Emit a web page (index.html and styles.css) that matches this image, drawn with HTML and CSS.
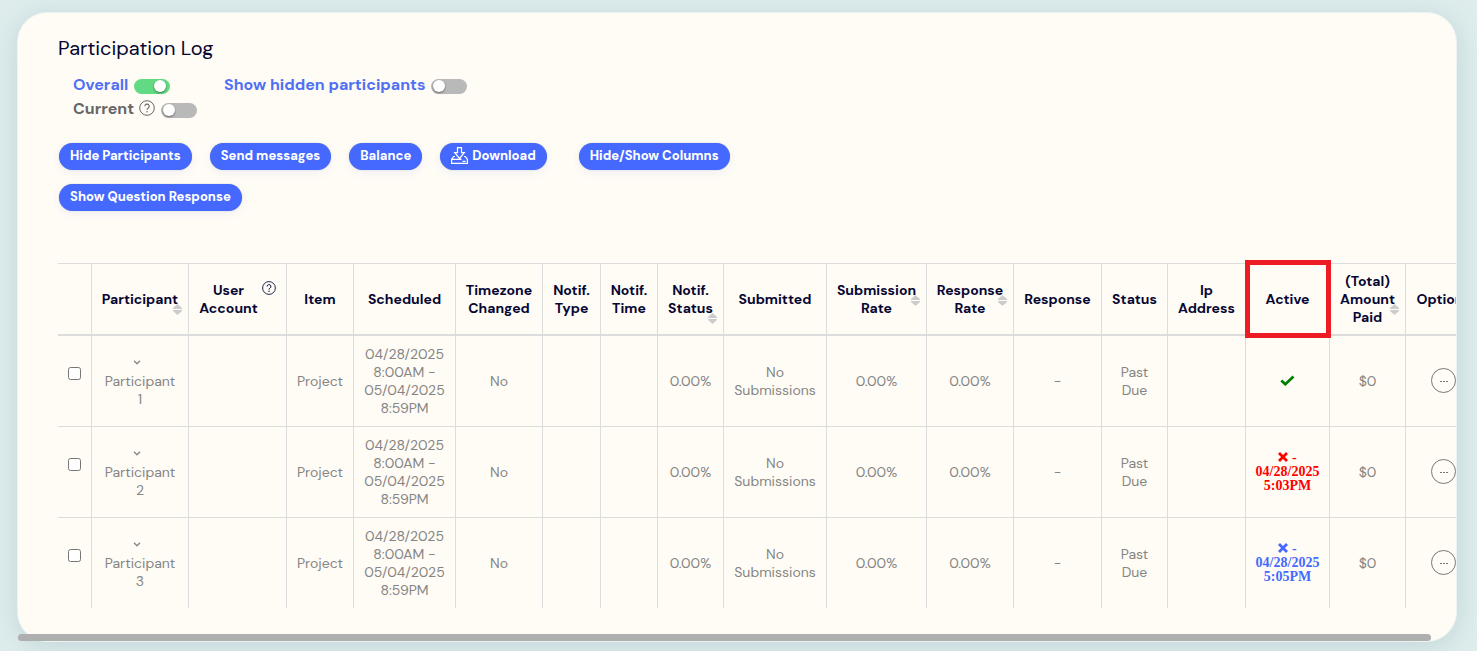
FILE: index.html
```html
<!DOCTYPE html>
<html lang="en">
<head>
<meta charset="utf-8">
<title>Participation Log</title>
<link rel="stylesheet" href="styles.css">
</head>
<body>
<svg class="defs" aria-hidden="true">
  <symbol id="help" viewBox="0 0 16 16"><circle cx="8" cy="8" r="7.3" fill="none" stroke="currentColor"/><path d="M5.8 6.3a2.2 2.2 0 1 1 3.3 1.9C8.300 8.700 8 9 8 9.800" fill="none" stroke="currentColor" stroke-width="1.100"/><circle cx="8" cy="11.700" r=".75" fill="currentColor"/></symbol>
  <symbol id="sort" viewBox="0 0 9 11"><path d="M4.500 0 9 4v1H0V4zM0 6h9v1l-4.500 4L0 7z" fill="currentColor"/></symbol>
  <symbol id="chevron" viewBox="0 0 8 5"><path d="m1 .8 3 3 3-3" fill="none" stroke="currentColor" stroke-width="1.300"/></symbol>
  <symbol id="cross" viewBox="0 0 10 10"><path d="m1 1 8 8m0-8L1 9" fill="none" stroke="currentColor" stroke-width="2.800"/></symbol>
</svg>
<main class="card">
  <div class="card-scroll">
    <h1 class="title">Participation Log</h1>
    <div class="toggles">
      <div class="toggle-group">
        <label class="toggle active">Overall <input class="switch" type="checkbox" checked></label>
        <label class="toggle">Current <span class="help-wrap"><svg class="help"><use href="#help"/></svg> <input class="switch" type="checkbox"></span></label>
      </div>
      <label class="toggle active">Show hidden participants <input class="switch" type="checkbox"></label>
    </div>
    <div class="actions">
      <button class="btn" type="button">Hide Participants</button>
      <button class="btn" type="button">Send messages</button>
      <button class="btn" type="button">Balance</button>
      <button class="btn btn-download" type="button"><svg class="download" viewBox="0 0 17 17"><path d="M6.500 .6h4v5h2.800L8.500 11.500 3.700 5.600h2.800zM4 9.500H2.800L.6 12.300v4h15.800v-4L14.200 9.500H13M.6 12.300h9.900M11.500 14.300h3" fill="none" stroke="currentColor" stroke-width="1.200"/></svg>Download</button>
      <button class="btn" type="button">Hide/Show Columns</button>
    </div>
    <div class="actions">
      <button class="btn" type="button">Show Question Response</button>
    </div>
    <table class="log">
      <colgroup><col class="w33"><col class="w97"><col class="w98"><col class="w67"><col class="w102"><col class="w87"><col class="w58"><col class="w57"><col class="w66"><col class="w103"><col class="w100"><col class="w87"><col class="w88"><col class="w66"><col class="w78"><col class="w84"><col class="w76"><col class="w76"></colgroup>
      <thead>
        <tr>
          <th></th>
          <th>Participant<svg class="sort sort-mid"><use href="#sort"/></svg></th>
          <th><span class="with-help">User<br>Account<svg class="help-small"><use href="#help"/></svg></span></th>
          <th>Item</th><th>Scheduled</th><th>Timezone Changed</th><th>Notif. Type</th><th>Notif. Time</th>
          <th>Notif. Status<svg class="sort sort-low"><use href="#sort"/></svg></th>
          <th>Submitted</th>
          <th>Submission Rate<svg class="sort"><use href="#sort"/></svg></th>
          <th>Response Rate<svg class="sort"><use href="#sort"/></svg></th>
          <th>Response</th><th>Status</th><th>Ip Address</th>
          <th class="marked">Active</th>
          <th>(Total) Amount Paid<svg class="sort sort-mid"><use href="#sort"/></svg></th>
          <th>Options</th>
        </tr>
      </thead>
      <tbody>
        <tr>
          <td><input class="pick" type="checkbox" aria-label="Select Participant 1"></td>
          <td><svg class="chevron"><use href="#chevron"/></svg>Participant<br>1</td><td></td><td>Project</td>
          <td>04/28/2025 8:00AM - 05/04/2025 8:59PM</td><td>No</td><td></td><td></td><td>0.00%</td><td>No Submissions</td><td>0.00%</td><td>0.00%</td><td>-</td><td>Past<br>Due</td><td></td>
          <td><svg class="check" viewBox="0 0 15 11"><path d="m1.300 5.500 4 3.700 8.200-7.700" fill="none" stroke="currentColor" stroke-width="2.800"/></svg></td>
          <td>$0</td><td><button class="more" type="button" aria-label="Options"><svg viewBox="0 0 25 25"><circle cx="12.500" cy="12.500" r="12" fill="none" stroke="currentColor"/><path d="M9 13.500h2m1 0h2m1 0h2" stroke="currentColor"/></svg></button></td>
        </tr>
        <tr>
          <td><input class="pick" type="checkbox" aria-label="Select Participant 2"></td>
          <td><svg class="chevron"><use href="#chevron"/></svg>Participant<br>2</td><td></td><td>Project</td>
          <td>04/28/2025 8:00AM - 05/04/2025 8:59PM</td><td>No</td><td></td><td></td><td>0.00%</td><td>No Submissions</td><td>0.00%</td><td>0.00%</td><td>-</td><td>Past<br>Due</td><td></td>
          <td class="inactive red"><svg class="cross"><use href="#cross"/></svg> -<br>04/28/2025 5:03PM</td>
          <td>$0</td><td><button class="more" type="button" aria-label="Options"><svg viewBox="0 0 25 25"><circle cx="12.500" cy="12.500" r="12" fill="none" stroke="currentColor"/><path d="M9 13.500h2m1 0h2m1 0h2" stroke="currentColor"/></svg></button></td>
        </tr>
        <tr>
          <td><input class="pick" type="checkbox" aria-label="Select Participant 3"></td>
          <td><svg class="chevron"><use href="#chevron"/></svg>Participant<br>3</td><td></td><td>Project</td>
          <td>04/28/2025 8:00AM - 05/04/2025 8:59PM</td><td>No</td><td></td><td></td><td>0.00%</td><td>No Submissions</td><td>0.00%</td><td>0.00%</td><td>-</td><td>Past<br>Due</td><td></td>
          <td class="inactive blue"><svg class="cross"><use href="#cross"/></svg> -<br>04/28/2025 5:05PM</td>
          <td>$0</td><td><button class="more" type="button" aria-label="Options"><svg viewBox="0 0 25 25"><circle cx="12.500" cy="12.500" r="12" fill="none" stroke="currentColor"/><path d="M9 13.500h2m1 0h2m1 0h2" stroke="currentColor"/></svg></button></td>
        </tr>
      </tbody>
    </table>
  </div>
  <div class="thumb"></div>
</main>
</body>
</html>
```
FILE: styles.css
```css
* { box-sizing: border-box; }
body {
  margin: 0;
  padding: 12px 20px 10px 17px;
  background: #deecec;
  font-family: "DM Sans", Inter, "Liberation Sans", sans-serif;
  color: #858585;
  overflow: hidden;
}
.defs { display: none; }
.card {
  position: relative;
  border: 1px solid #edf3f3;
  border-radius: 30px;
  background: #fffcf5;
  box-shadow: 0 4px 24px rgba(110, 150, 160, .25);
}
.card-scroll {
  overflow: hidden;
  border-radius: 29px;
  padding: 23px 0 33px 40px;
}
.title {
  margin: 0 0 13px;
  font-size: 20px;
  line-height: 24px;
  font-weight: 400;
  color: #060633;
}
.toggles { display: flex; gap: 27px; margin-left: 15px; }
.toggle-group { display: flex; flex-direction: column; align-items: flex-start; }
.toggle {
  display: flex;
  gap: 6px;
  height: 24px;
  font-size: 16px;
  line-height: 24px;
  font-weight: 700;
  color: #666;
}
.active { color: #4f70f3; }
.toggle:has(.help-wrap) { gap: 5px; }
.help-wrap { display: flex; gap: 6px; }
.help { width: 16px; height: 16px; margin-top: 3px; }
.switch {
  appearance: none;
  position: relative;
  width: 36px;
  height: 15px;
  margin: 6px 0 0;
  border-radius: 8px;
  background: #b9b9b9;
}
.switch::after {
  content: "";
  position: absolute;
  top: 1px;
  left: 2px;
  width: 12px;
  height: 12px;
  border-radius: 50%;
  background: #fff;
  box-shadow: 0 1px 2px rgba(0, 0, 0, .45);
}
.switch:checked { background: #62d983; }
.switch:checked::after { left: 20px; }
.actions { display: flex; gap: 18px; margin: 22px 0 0 1px; }
.actions + .actions { margin-top: 14px; }
.btn {
  height: 27px;
  padding: 0 11px 1px;
  border: 0;
  border-radius: 14px;
  background: #4569ff;
  box-shadow: 0 0 1px rgba(0, 0, 0, .4), 0 3px 8px rgba(69, 105, 255, .08);
  color: #fff;
  font: 800 13px/18px "DM Sans", Inter, "Liberation Sans", sans-serif;
}
.btn-download { display: flex; align-items: center; gap: 4px; margin-right: 14px; }
.download { width: 17px; height: 17px; margin-bottom: 2px; }
.log {
  width: 1423px;
  margin-top: 52px;
  table-layout: fixed;
  border-collapse: collapse;
  font-size: 14px;
  line-height: 18px;
  text-align: center;
}
.w33 { width: 33px; } .w57 { width: 57px; } .w58 { width: 58px; }
.w66 { width: 66px; } .w67 { width: 67px; } .w76 { width: 76px; }
.w78 { width: 78px; } .w84 { width: 84px; } .w87 { width: 87px; }
.w88 { width: 88px; } .w97 { width: 97px; } .w98 { width: 98px; }
.w100 { width: 100px; } .w102 { width: 102px; } .w103 { width: 103px; }
th {
  position: relative;
  padding: 8px 5px 8px 6px;
  border-top: 1px solid #dcdcdc;
  border-bottom: 2px solid #dcdcdc;
  font-weight: 700;
  color: #060633;
}
td { height: 91px; padding: 8px 7px 8px 8px; border-top: 1px solid #dcdcdc; }
th + th, td + td { border-left: 1px solid #dcdcdc; }
.sort {
  position: absolute;
  right: 6px;
  top: 50%;
  width: 9px;
  height: 11px;
  margin-top: -4px;
  color: #ccc;
}
.sort-mid { margin-top: 5px; }
.sort-low { margin-top: 14px; }
.with-help { position: relative; display: block; padding-right: 18px; }
.help-small { position: absolute; top: 0; right: 5px; width: 14px; height: 14px; }
.marked::after {
  content: "";
  position: absolute;
  inset: -4px -2px -4px -1px;
  border: 5px solid #ed1c24;
}
.pick { display: block; width: 13px; height: 13px; margin: 0 auto 15px; }
.chevron { display: block; width: 8px; height: 5px; margin: 6px auto 7px 33px; }
.check { width: 15px; height: 11px; color: #008000; }
.cross { width: 10px; height: 10px; vertical-align: 0; }
.inactive { font: 700 14px/14px "Liberation Serif", serif; }
.red { color: #f00; }
.blue { color: #4569ff; }
.more {
  display: block;
  width: 25px;
  height: 25px;
  margin: 0 auto;
  padding: 0;
  border: 0;
  background: none;
  color: #777;
}
.more svg { display: block; }
.thumb {
  position: absolute;
  left: 0;
  right: 25px;
  bottom: 0;
  height: 7px;
  border-radius: 4px;
  background: #afafaf;
}
```
